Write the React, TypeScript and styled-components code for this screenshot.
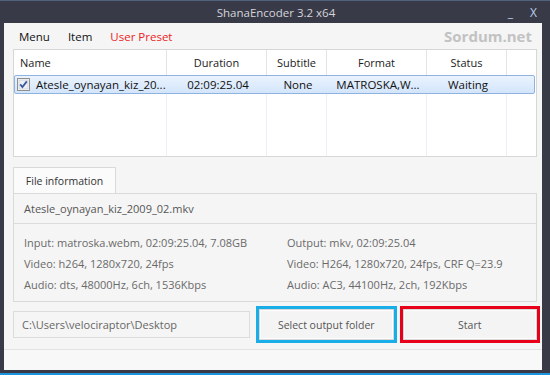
import styled, { createGlobalStyle } from "styled-components";

const GlobalStyle = createGlobalStyle`
    html, body {
        margin: 0;
        padding: 0;
    }
    body {
        background: #2f303b;
        font-family: "Open Sans", "Noto Sans", sans-serif;
    }
    * {
        box-sizing: border-box;
    }
`;

const Screen = styled.div`
    width: 550px;
    height: 375px;
    display: flex;
    flex-direction: column;
    border-top: 1px solid #51607c;
    background: #393a48;
    overflow: hidden;
`;

const Frame = styled.div`
    flex: 1;
    display: flex;
    flex-direction: column;
    padding: 0 8px 3px 4px;
`;

const TaskbarEdge = styled.div`
    height: 2px;
    background: #1c93dc;
`;

const TitleBar = styled.div`
    height: 22px;
    display: grid;
    grid-template-columns: 1fr auto 1fr;
    align-items: center;
`;

const Title = styled.div`
    grid-column: 2;
    font-size: 11.5px;
    color: #d4d5da;
    padding-left: 6px;
`;

const WindowControls = styled.div`
    justify-self: end;
    display: flex;
    align-items: center;
    gap: 17px;
    padding-right: 5px;
    color: #b9cce8;
    font-size: 12px;
`;

const Client = styled.div`
    flex: 1;
    display: flex;
    flex-direction: column;
    background: #f5f5f5;
`;

const MenuBar = styled.div`
    height: 26px;
    display: flex;
    align-items: center;
    padding: 0 10px 0 6px;
`;

const MenuItem = styled.span<{ $accent?: boolean }>`
    padding: 0 9px;
    font-size: 11.5px;
    color: ${(p) => (p.$accent ? "#ee1c24" : "#111")};
`;

const Brand = styled.span`
    margin-left: auto;
    font-size: 15px;
    font-weight: 700;
    color: #c2c2c2;
`;

const Table = styled.div`
    height: 108px;
    margin: 0 5px 0 9px;
    border: 1px solid #d7d7d7;
    background: #fff;
    display: flex;
    flex-direction: column;
`;

const columns = "153px 100px 60px 100px 80px 1fr";

const HeaderRow = styled.div`
    height: 25px;
    display: grid;
    grid-template-columns: ${columns};
`;

const HeaderCell = styled.div<{ $left?: boolean }>`
    display: flex;
    align-items: center;
    justify-content: ${(p) => (p.$left ? "flex-start" : "center")};
    padding-left: ${(p) => (p.$left ? "6px" : "0")};
    border-right: 1px solid #e4e4e4;
    font-size: 11px;
    color: #1b1b1b;
    &:last-child {
        border-right: none;
    }
`;

const Body = styled.div`
    flex: 1;
    display: grid;
    grid-template-columns: ${columns};
    grid-template-rows: 19px 1fr;
`;

const SelectedRow = styled.div`
    grid-column: 1 / -1;
    display: grid;
    grid-template-columns: ${columns};
    margin: 0 1px 0 0;
    border: 1px solid #8fb2df;
    border-radius: 2px;
    background: linear-gradient(#eaf3fe, #d3e5fb);
`;

const Cell = styled.div<{ $left?: boolean }>`
    display: flex;
    align-items: center;
    justify-content: ${(p) => (p.$left ? "flex-start" : "center")};
    gap: 6px;
    padding-left: ${(p) => (p.$left ? "2px" : "0")};
    font-size: 11.5px;
    color: #111;
    white-space: nowrap;
    overflow: hidden;
`;

const Lane = styled.div`
    border-right: 1px solid #e9f0f9;
    &:last-child {
        border-right: none;
    }
`;

const TabStrip = styled.div`
    margin: 10px 5px 0 9px;
    display: flex;
`;

const Tab = styled.div`
    width: 103px;
    height: 26px;
    display: flex;
    align-items: center;
    justify-content: center;
    border: 1px solid #dadada;
    border-bottom: none;
    background: #fbfbfb;
    font-size: 10.5px;
    color: #333;
`;

const Panel = styled.div`
    height: 109px;
    margin: 0 5px 0 9px;
    border: 1px solid #dadada;
    display: flex;
    flex-direction: column;
`;

const FileName = styled.div`
    height: 30px;
    display: flex;
    align-items: center;
    padding-left: 10px;
    border-bottom: 1px solid #dcdcdc;
    font-size: 11px;
    color: #555;
`;

const InfoGrid = styled.div`
    display: grid;
    grid-template-columns: 263px 1fr;
    grid-auto-rows: 21px;
    align-items: center;
    padding: 8px 0 0 10px;
    font-size: 11px;
    color: #6a6a6a;
`;

const ActionRow = styled.div`
    margin: 7px 5px 0 9px;
    display: flex;
    align-items: center;
    gap: 9px;
`;

const PathField = styled.div`
    width: 237px;
    height: 27px;
    display: flex;
    align-items: center;
    padding-left: 8px;
    border: 1px solid #dcdcdc;
    font-size: 11px;
    color: #666;
`;

const ActionButton = styled.button<{ $mark: string }>`
    flex: 1;
    height: 31px;
    border: 1px solid #d8d8d8;
    background: #f4f4f4;
    box-shadow: inset 0 0 0 1px #fdfdfd;
    outline: 3px solid ${(p) => p.$mark};
    font-family: inherit;
    font-size: 10.5px;
    color: #555;
    padding: 0;
`;

const StatusStrip = styled.div`
    flex: 1;
    margin-top: 9px;
    border-top: 1px solid #e2e2e2;
    background: #f8f8f8;
`;

function CheckBox() {
    return (
        <svg width="13" height="13" viewBox="0 0 13 13">
            <rect x="0.5" y="0.5" width="12" height="12" fill="#fff" stroke="#8e8f8f" />
            <rect x="2" y="2" width="9" height="9" fill="#eef0f4" stroke="#c9ccd3" strokeWidth="0.8" />
            <path d="M3.2 6.4 L5.4 9 L9.8 3.4" fill="none" stroke="#3b58a0" strokeWidth="1.8" />
        </svg>
    );
}

function App() {
    return (
        <>
            <GlobalStyle />
            <Screen>
                <Frame>
                    <TitleBar>
                        <Title>ShanaEncoder 3.2 x64</Title>
                        <WindowControls>
                            <span>_</span>
                            <span>X</span>
                        </WindowControls>
                    </TitleBar>
                    <Client>
                        <MenuBar>
                            <MenuItem>Menu</MenuItem>
                            <MenuItem>Item</MenuItem>
                            <MenuItem $accent>User Preset</MenuItem>
                            <Brand>Sordum.net</Brand>
                        </MenuBar>
                        <Table>
                            <HeaderRow>
                                <HeaderCell $left>Name</HeaderCell>
                                <HeaderCell>Duration</HeaderCell>
                                <HeaderCell>Subtitle</HeaderCell>
                                <HeaderCell>Format</HeaderCell>
                                <HeaderCell>Status</HeaderCell>
                                <HeaderCell />
                            </HeaderRow>
                            <Body>
                                <SelectedRow>
                                    <Cell $left>
                                        <CheckBox />
                                        Atesle_oynayan_kiz_20...
                                    </Cell>
                                    <Cell>02:09:25.04</Cell>
                                    <Cell>None</Cell>
                                    <Cell>MATROSKA,W...</Cell>
                                    <Cell>Waiting</Cell>
                                    <Cell />
                                </SelectedRow>
                                <Lane />
                                <Lane />
                                <Lane />
                                <Lane />
                                <Lane />
                                <Lane />
                            </Body>
                        </Table>
                        <TabStrip>
                            <Tab>File information</Tab>
                        </TabStrip>
                        <Panel>
                            <FileName>Atesle_oynayan_kiz_2009_02.mkv</FileName>
                            <InfoGrid>
                                <span>Input: matroska.webm, 02:09:25.04, 7.08GB</span>
                                <span>Output: mkv, 02:09:25.04</span>
                                <span>Video: h264, 1280x720, 24fps</span>
                                <span>Video: H264, 1280x720, 24fps, CRF Q=23.9</span>
                                <span>Audio: dts, 48000Hz, 6ch, 1536Kbps</span>
                                <span>Audio: AC3, 44100Hz, 2ch, 192Kbps</span>
                            </InfoGrid>
                        </Panel>
                        <ActionRow>
                            <PathField>C:\Users\velociraptor\Desktop</PathField>
                            <ActionButton $mark="#1aaee8">Select output folder</ActionButton>
                            <ActionButton $mark="#e8001b">Start</ActionButton>
                        </ActionRow>
                        <StatusStrip />
                    </Client>
                </Frame>
                <TaskbarEdge />
            </Screen>
        </>
    );
}

export default App;
